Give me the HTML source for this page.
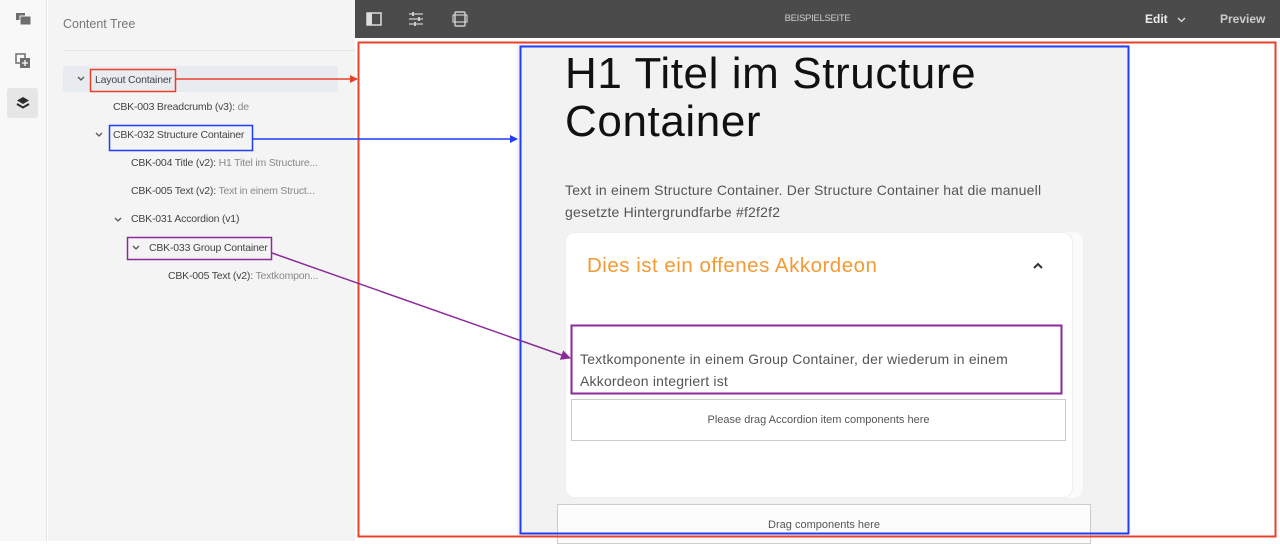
<!DOCTYPE html>
<html><head><meta charset="utf-8"><style>
*{margin:0;padding:0;box-sizing:border-box}
body{width:1280px;height:541px;overflow:hidden;position:relative;background:#fff;font-family:"Liberation Sans",sans-serif}
.abs{position:absolute}
#rail{left:0;top:0;width:47px;height:541px;background:#f8f8f8;border-right:1px solid #e4e4e4}
#panel{left:48px;top:0;width:307px;height:541px;background:#f4f4f4}
#bar{left:355px;top:0;width:925px;height:38px;background:#4b4b4b}
.t{position:absolute;font-size:10.5px;color:#444;white-space:nowrap;letter-spacing:-0.2px}
.t span{color:#888}
.chev{position:absolute}
#sc{left:517px;top:42px;width:612px;height:495px;background:#f2f2f2}
</style></head><body>
<div id="rail" class="abs">
 <svg class="abs" style="left:15px;top:11px" width="18" height="16"><rect x="1" y="2" width="9" height="7" fill="#6e6e6e"/><rect x="5" y="5" width="11" height="9" fill="#6e6e6e" stroke="#f8f8f8" stroke-width="1"/></svg>
 <svg class="abs" style="left:15px;top:53px" width="18" height="16"><rect x="1" y="1" width="9" height="9" fill="none" stroke="#6e6e6e" stroke-width="1.5"/><rect x="5" y="5" width="10" height="10" fill="#6e6e6e"/><path d="M10 7v6M7 10h6" stroke="#fff" stroke-width="1.3"/></svg>
 <div class="abs" style="left:7px;top:88px;width:31px;height:30px;background:#e6e6e6;border-radius:3px"></div>
 <svg class="abs" style="left:15px;top:95px" width="16" height="16"><path d="M8 2l6 3.5-6 3.5-6-3.5z" fill="#2c2c2c"/><path d="M2 9l6 3.5 6-3.5" fill="none" stroke="#2c2c2c" stroke-width="2"/></svg>
</div>
<div id="panel" class="abs">
 <div class="abs" style="left:15px;top:17px;font-size:12.5px;color:#777">Content Tree</div>
 <div class="abs" style="left:15px;top:50px;width:292px;height:1px;background:#e6e6e6"></div>
 <div class="abs" style="left:15px;top:66px;width:275px;height:26px;background:#e8ebf0"></div>
</div>
<svg class="chev" style="left:77px;top:76px" width="8" height="5"><path d="M1 1l3 3 3-3" fill="none" stroke="#555" stroke-width="1.3"/></svg>
<div class="t" style="left:95px;top:74px">Layout Container</div>
<div class="t" style="left:113px;top:101px">CBK-003 Breadcrumb (v3): <span>de</span></div>
<svg class="chev" style="left:95px;top:132px" width="8" height="5"><path d="M1 1l3 3 3-3" fill="none" stroke="#555" stroke-width="1.3"/></svg>
<div class="t" style="left:113px;top:129px">CBK-032 Structure Container</div>
<div class="t" style="left:131px;top:157px">CBK-004 Title (v2): <span>H1 Titel im Structure...</span></div>
<div class="t" style="left:131px;top:185px">CBK-005 Text (v2): <span>Text in einem Struct...</span></div>
<svg class="chev" style="left:114px;top:217px" width="8" height="5"><path d="M1 1l3 3 3-3" fill="none" stroke="#555" stroke-width="1.3"/></svg>
<div class="t" style="left:131px;top:213px">CBK-031 Accordion (v1)</div>
<svg class="chev" style="left:132px;top:245px" width="8" height="5"><path d="M1 1l3 3 3-3" fill="none" stroke="#555" stroke-width="1.3"/></svg>
<div class="t" style="left:149px;top:242px">CBK-033 Group Container</div>
<div class="t" style="left:168px;top:270px">CBK-005 Text (v2): <span>Textkompon...</span></div>

<div id="bar" class="abs">
 <svg class="abs" style="left:11px;top:12px" width="16" height="14"><rect x="1" y="1" width="14" height="12" fill="none" stroke="#ddd" stroke-width="1.5"/><rect x="1" y="1" width="5" height="12" fill="#ddd"/></svg>
 <svg class="abs" style="left:53px;top:11px" width="16" height="16"><path d="M1 3h14M1 8h14M1 13h14" stroke="#ccc" stroke-width="1.3"/><rect x="4" y="1" width="2" height="4" fill="#ccc"/><rect x="10" y="6" width="2" height="4" fill="#ccc"/><rect x="6" y="11" width="2" height="4" fill="#ccc"/></svg>
 <svg class="abs" style="left:97px;top:11px" width="16" height="16"><rect x="3" y="1" width="10" height="14" rx="1" fill="none" stroke="#ccc" stroke-width="1.5"/><rect x="1" y="4" width="14" height="7" fill="none" stroke="#ccc" stroke-width="1.2"/></svg>
 <div class="abs" style="left:0;width:925px;top:13px;text-align:center;font-size:9.5px;color:#ccc;letter-spacing:-0.3px">BEISPIELSEITE</div>
 <div class="abs" style="left:790px;top:12px;font-size:12px;color:#eee;font-weight:bold">Edit</div>
 <svg class="abs" style="left:822px;top:17px" width="9" height="6"><path d="M1 1l3.5 3.5L8 1" fill="none" stroke="#ddd" stroke-width="1.3"/></svg>
 <div class="abs" style="left:865px;top:12px;font-size:12px;color:#ccc;font-weight:bold">Preview</div>
</div>

<div id="sc" class="abs"></div>
<div class="abs" style="left:565px;top:50px;font-size:44px;line-height:48px;color:#111;letter-spacing:0.6px">H1 Titel im Structure<br>Container</div>
<div class="abs" style="left:565px;top:179px;font-size:14px;line-height:22px;color:#555;letter-spacing:0.2px">Text in einem Structure Container. Der Structure Container hat die manuell<br>gesetzte Hintergrundfarbe #f2f2f2</div>
<div class="abs" style="left:565px;top:232px;width:518px;height:266px;background:#fbfbfb;border-radius:10px"></div>
<div class="abs" style="left:565px;top:232px;width:508px;height:266px;background:#fff;border-radius:10px;border:1px solid #eee"></div>
<div class="abs" style="left:587px;top:254px;font-size:20.5px;color:#f39a33;letter-spacing:0.5px">Dies ist ein offenes Akkordeon</div>
<svg class="abs" style="left:1033px;top:262px" width="10" height="8"><path d="M1 6l4-4 4 4" fill="none" stroke="#333" stroke-width="2"/></svg>
<div class="abs" style="left:580px;top:348px;font-size:14px;line-height:22px;color:#555;letter-spacing:0.2px">Textkomponente in einem Group Container, der wiederum in einem<br>Akkordeon integriert ist</div>
<div class="abs" style="left:571px;top:399px;width:495px;height:42px;border:1px solid #ccc;background:#fff;text-align:center;line-height:40px;font-size:11px;color:#555">Please drag Accordion item components here</div>
<div class="abs" style="left:557px;top:504px;width:534px;height:40px;border:1px solid #ccc;background:#fcfcfc;text-align:center;padding-top:14px;font-size:11px;color:#555">Drag components here</div>

<svg class="abs" style="left:0;top:0" width="1280" height="541">
 <defs>
  <marker id="mr" markerWidth="8" markerHeight="8" refX="7" refY="4" orient="auto" markerUnits="userSpaceOnUse"><path d="M0 0L8 4L0 8z" fill="#e8412a"/></marker>
  <marker id="mb" markerWidth="8" markerHeight="8" refX="7" refY="4" orient="auto" markerUnits="userSpaceOnUse"><path d="M0 0L8 4L0 8z" fill="#1f3cff"/></marker>
  <marker id="mp" markerWidth="10" markerHeight="10" refX="9" refY="5" orient="auto" markerUnits="userSpaceOnUse"><path d="M0 0L10 5L0 10z" fill="#8b2a99"/></marker>
 </defs>
 <rect x="358.5" y="42.5" width="917" height="494" fill="none" stroke="#e8412a" stroke-width="2"/>
 <rect x="520.5" y="46.5" width="608" height="487" fill="none" stroke="#1f3cff" stroke-width="2"/>
 <rect x="90.5" y="69.5" width="85" height="22" fill="none" stroke="#e8412a" stroke-width="1.5"/>
 <rect x="109.5" y="125.5" width="143" height="25" fill="none" stroke="#1f3cff" stroke-width="1.5"/>
 <rect x="127.5" y="237.5" width="144" height="22" fill="none" stroke="#8b2a99" stroke-width="1.5"/>
 <rect x="571.5" y="325.5" width="490" height="68" fill="none" stroke="#8b2a99" stroke-width="2"/>
 <line x1="176" y1="79" x2="357" y2="79" stroke="#e8412a" stroke-width="1.5" marker-end="url(#mr)"/>
 <line x1="253" y1="139" x2="517" y2="139" stroke="#1f3cff" stroke-width="1.5" marker-end="url(#mb)"/>
 <line x1="272" y1="253" x2="570" y2="358" stroke="#8b2a99" stroke-width="1.5" marker-end="url(#mp)"/>
</svg>
</body></html>
